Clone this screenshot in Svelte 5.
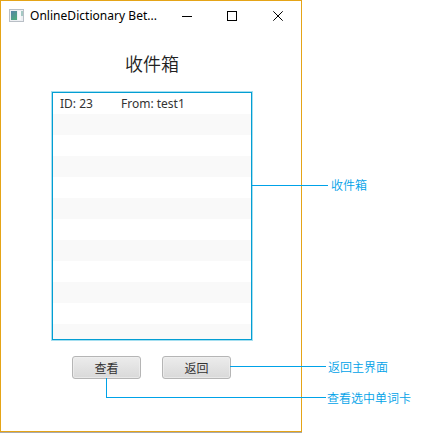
<script>
  const messages = [{ id: 23, from: 'test1' }];
  const rows = Array.from({ length: 12 }, (_, i) => messages[i] ?? null);
</script>

<main>
  <section class="window">
    <header>
      <svg class="app" width="15" height="13" viewBox="0 0 15 13" shape-rendering="crispEdges">
        <defs>
          <linearGradient id="pane" x1="0" y1="0" x2="0.6" y2="1">
            <stop offset="0" stop-color="#5682a8" />
            <stop offset="1" stop-color="#4fa97f" />
          </linearGradient>
        </defs>
        <rect width="15" height="13" fill="#b9bfc6" />
        <rect x="1" y="1" width="13" height="11" fill="#eef0f3" />
        <rect x="2" y="2" width="6" height="9" fill="url(#pane)" />
        <rect x="9" y="2" width="3" height="9" fill="#f8f9fb" />
        <rect x="12" y="2" width="2" height="5" fill="#a5c9c4" />
      </svg>
      <span class="name">OnlineDictionary Bet...</span>
      <svg class="controls" width="102" height="10" viewBox="0 0 102 10" fill="none" stroke="#000">
        <path d="M0 5.5H10M45.5.5h9v9h-9z" shape-rendering="crispEdges" />
        <path d="M91.3.3l9.4 9.4M100.7.3l-9.4 9.4" />
      </svg>
    </header>
    <h1>收件箱</h1>
    <div class="list">
      {#each rows as row}
        <div class="row">
          {#if row}
            <span class="id">ID: {row.id}</span>
            <span class="from">From: {row.from}</span>
          {/if}
        </div>
      {/each}
    </div>
    <div class="buttons">
      <button>查看</button>
      <button>返回</button>
    </div>
  </section>

  <svg class="lines" width="429" height="433" fill="none" stroke="#00a2e8" shape-rendering="crispEdges">
    <path d="M252 185.5H328M230 366.5H326M106.5 378V397.5H326" />
  </svg>
  <span class="note" style:left="331px" style:top="176px">收件箱</span>
  <span class="note" style:left="328px" style:top="358px">返回主界面</span>
  <span class="note" style:left="327px" style:top="389px">查看选中单词卡</span>
</main>

<style>
  :global(body) { background: #fff; }
  main {
    position: relative;
    width: 429px;
    height: 433px;
    overflow: hidden;
    font-family: "Noto Sans", "Noto Sans CJK SC", sans-serif;
    font-size: 12px;
    color: #333;
  }
  .window {
    box-sizing: border-box;
    width: 302px;
    height: 432px;
    border: 1px solid #e5a417;
    box-shadow: 0 1px 0 #aaa;
    background: #fff;
  }
  header {
    display: flex;
    align-items: center;
    height: 29px;
    padding-left: 8px;
  }
  .app { flex: none; }
  .name {
    width: 128px;
    margin-left: 6px;
    white-space: nowrap;
    color: #000;
    letter-spacing: 0.03px;
  }
  .controls { margin-left: 24px; flex: none; }
  h1 {
    margin: 19px 0 0;
    height: 28px;
    padding-left: 124px;
    font: 350 18px/28px "Noto Sans CJK SC", sans-serif;
    color: #222;
  }
  .list {
    box-sizing: border-box;
    width: 200px;
    height: 248px;
    margin: 15px 0 0 51px;
    border: 1px solid #039ed3;
    box-shadow: 0 0 0 1px #a5dff0;
    overflow: hidden;
  }
  .row {
    display: flex;
    height: 21px;
    line-height: 21px;
    padding-left: 7px;
    white-space: nowrap;
  }
  .row:nth-child(even) { background: #f9f9f9; }
  .id { width: 61px; letter-spacing: 0; }
  .from { letter-spacing: 0; }
  .buttons {
    display: flex;
    gap: 21px;
    margin: 16px 0 0 71px;
  }
  button {
    box-sizing: border-box;
    width: 69px;
    height: 23px;
    padding: 0 0 1px;
    border: 1px solid #b5b5b5;
    border-radius: 3px;
    background: linear-gradient(#ececec, #d9d9d9);
    box-shadow: inset 0 0 0 1px #f0f0f0aa;
    font: 12px/19px "Noto Sans CJK SC", sans-serif;
    color: #333;
  }
  .lines { position: absolute; left: 0; top: 0; }
  .note {
    position: absolute;
    font: 350 12px/18px "Noto Sans CJK SC", sans-serif;
    white-space: nowrap;
    color: #00a2e8;
  }
</style>
